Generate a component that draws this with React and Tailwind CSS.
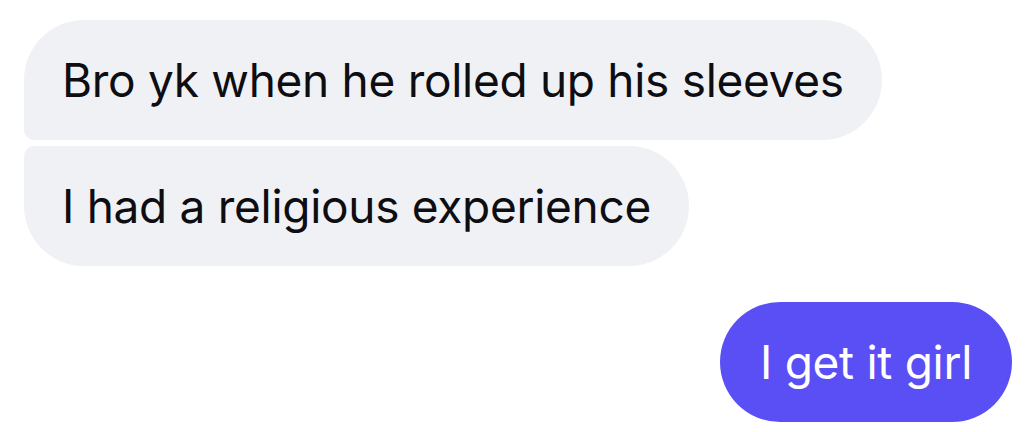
export default function App() {
  return (
    <div className="w-[1034px] h-[432px] bg-white font-['Inter',sans-serif] flex flex-col pt-5 px-6">
      <div className="flex flex-col items-start gap-1.5">
        <div className="h-[120px] flex items-center px-[38px] bg-[#f0f1f5] text-[#0d0d12] text-[46px] tracking-[-0.3px] rounded-t-[60px] rounded-br-[60px] rounded-bl-[10px]">
          Bro yk when he rolled up his sleeves
        </div>
        <div className="h-[120px] flex items-center px-[38px] bg-[#f0f1f5] text-[#0d0d12] text-[46px] tracking-[-0.3px] rounded-b-[60px] rounded-tr-[60px] rounded-tl-[10px]">
          I had a religious experience
        </div>
      </div>
      <div className="flex justify-end mt-9 -mr-[2px]">
        <div className="h-[120px] flex items-center pl-[40px] pr-[40px] bg-[#5a4ff5] text-white text-[46px] tracking-[-0.3px] rounded-[60px]">
          I get it girl
        </div>
      </div>
    </div>
  );
}
